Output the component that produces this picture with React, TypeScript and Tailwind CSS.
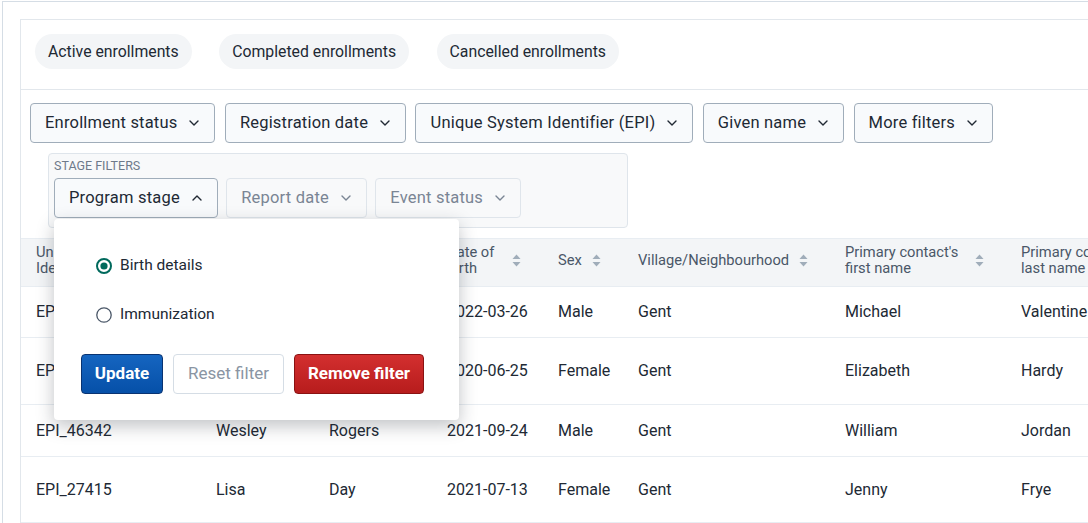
import React from 'react';

const font = { fontFamily: 'Roboto, "Liberation Sans", sans-serif' };

const Chevron = ({ up = false }: { up?: boolean }) => (
	<svg width="10" height="6" viewBox="0 0 10 6" className="shrink-0">
		<path
			d={up ? 'M1 5 L5 1 L9 5' : 'M1 1 L5 5 L9 1'}
			fill="none"
			stroke="currentColor"
			strokeWidth="1.4"
			strokeLinecap="round"
			strokeLinejoin="round"
		/>
	</svg>
);

const SortIcon = () => (
	<svg width="9" height="13" viewBox="0 0 9 13" className="shrink-0 text-[#a0adba]">
		<path d="M4.5 0.5 L8.5 5 L0.5 5 Z" fill="currentColor" />
		<path d="M4.5 12.5 L8.5 8 L0.5 8 Z" fill="currentColor" />
	</svg>
);

const FilterButton = ({ label, disabled = false, open = false }: { label: string; disabled?: boolean; open?: boolean }) => (
	<div
		className={
			'flex h-[40px] items-center gap-[12px] rounded-[4px] border pl-[14px] pr-[15px] text-[16.5px] tracking-[0.2px] ' +
			(disabled
				? 'border-[#dfe5eb] bg-[#f8f9fa] text-[#7a8594]'
				: 'border-[#a0adba] bg-[#f8fafc] text-[#212934]')
		}
	>
		<span>{label}</span>
		<Chevron up={open} />
	</div>
);

const Radio = ({ label, checked = false }: { label: string; checked?: boolean }) => (
	<label className="flex h-[23px] items-center gap-[7px] text-[15.5px] text-[#212934]">
		<svg width="18" height="18" viewBox="0 0 18 18">
			{checked ? (
				<>
					<circle cx="9" cy="9" r="7" fill="none" stroke="#00695c" strokeWidth="2" />
					<circle cx="9" cy="9" r="3.6" fill="#00695c" />
				</>
			) : (
				<circle cx="9" cy="9" r="7.2" fill="white" stroke="#4a5768" strokeWidth="1.3" />
			)}
		</svg>
		<span>{label}</span>
	</label>
);

const columns = [
	{ title: ['Unique System', 'Identifier (EPI)'], w: 'w-[180px]' },
	{ title: ['First name'], w: 'w-[113px]' },
	{ title: ['Last name'], w: 'w-[118px]' },
	{ title: ['Date of', 'birth'], w: 'w-[111px]' },
	{ title: ['Sex'], w: 'w-[80px]' },
	{ title: ['Village/Neighbourhood'], w: 'w-[207px]' },
	{ title: ["Primary contact's", 'first name'], w: 'w-[176px]' },
	{ title: ["Primary contact's", 'last name'], w: 'w-[200px]' },
];

const rows = [
	{ h: 'h-[51px]', cells: ['EPI_55123', 'Emma', 'Valentine', '2022-03-26', 'Male', 'Gent', 'Michael', 'Valentine'] },
	{ h: 'h-[67px]', cells: ['EPI_31094', 'Sophie', 'Hardy', '2020-06-25', 'Female', 'Gent', 'Elizabeth', 'Hardy'] },
	{ h: 'h-[52px]', cells: ['EPI_46342', 'Wesley', 'Rogers', '2021-09-24', 'Male', 'Gent', 'William', 'Jordan'] },
	{ h: 'h-[66px]', cells: ['EPI_27415', 'Lisa', 'Day', '2021-07-13', 'Female', 'Gent', 'Jenny', 'Frye'] },
];

const App = () => {
	return (
		<div className="h-[523px] w-[1088px] overflow-hidden bg-white" style={font}>
			<div className="ml-[2px] mt-[1px] h-full border-l border-t border-[#d5dde5] pl-[17px] pt-[17px]">
				<div className="h-full w-[1200px] border-l border-t border-[#e2e7ec]">
					{/* tabs */}
					<div className="flex gap-[27.5px] border-b border-[#e2e7ec] pb-[20px] pl-[14px] pt-[14px]">
						{['Active enrollments', 'Completed enrollments', 'Cancelled enrollments'].map((t) => (
							<div
								key={t}
								className="flex h-[35px] items-center rounded-full bg-[#f3f5f7] px-[13px] text-[15.8px] text-[#212934]"
							>
								{t}
							</div>
						))}
					</div>

					{/* filters */}
					<div className="relative pl-[9px] pt-[13px]">
						<div className="flex gap-[9.4px]">
							<FilterButton label="Enrollment status" />
							<FilterButton label="Registration date" />
							<FilterButton label="Unique System Identifier (EPI)" />
							<FilterButton label="Given name" />
							<FilterButton label="More filters" />
						</div>
						<div className="ml-[18px] mt-[10px] w-[580px] rounded-[4px] border border-[#dfe5eb] bg-[#f8f9fa] px-[5px] pb-[9px] pt-[4px]">
							<div className="text-[12.5px] uppercase leading-[15px] text-[#6e7a8a]">Stage filters</div>
							<div className="relative mt-[5px] flex gap-[8.4px]">
								<FilterButton label="Program stage" open />
								<FilterButton label="Report date" disabled />
								<FilterButton label="Event status" disabled />

								{/* popover */}
								<div className="absolute left-0 top-[41px] z-10 flex h-[201px] w-[405px] flex-col rounded-[4px] bg-white px-[27px] pt-[35.5px] shadow-[0_6px_18px_rgba(33,41,52,0.28)]">
									<div className="flex flex-col gap-[26px] pl-[14px]">
										<Radio label="Birth details" checked />
										<Radio label="Immunization" />
									</div>
									<div className="mt-[27.5px] flex gap-[10px]">
										<div className="flex h-[40px] w-[82px] items-center justify-center rounded-[4px] border border-[#093371] bg-gradient-to-b from-[#1565c0] to-[#0650a8] text-[17px] font-bold text-white">
											Update
										</div>
										<div className="flex h-[40px] w-[111px] items-center justify-center rounded-[4px] border border-[#d5dde5] bg-white text-[17px] text-[#8a95a3]">
											Reset filter
										</div>
										<div className="flex h-[40px] w-[130px] items-center justify-center rounded-[4px] border border-[#8a1212] bg-gradient-to-b from-[#d32f2f] to-[#b71c1c] text-[17px] font-bold text-white">
											Remove filter
										</div>
									</div>
								</div>
							</div>
						</div>
					</div>

					{/* table */}
					<div className="mt-[10px]">
						<div className="flex h-[49px] border-b border-t border-[#e8edf2] bg-[#f3f5f7]">
							{columns.map((c, i) => (
								<div
									key={i}
									className={c.w + ' flex shrink-0 items-center justify-between pb-[5px] pl-[15px] pr-[22px] text-[14.7px] leading-[16px] text-[#4a5768]'}
								>
									<div>
										{c.title.map((l) => (
											<div key={l} className="whitespace-nowrap">
												{l}
											</div>
										))}
									</div>
									<SortIcon />
								</div>
							))}
						</div>
						{rows.map((r, ri) => (
							<div key={ri} className={r.h + ' flex border-b border-[#e8edf2]'}>
								{r.cells.map((cell, ci) => (
									<div
										key={ci}
										className={columns[ci].w + ' flex shrink-0 items-center pl-[15px] text-[16px] text-[#212934]'}
									>
										{cell}
									</div>
								))}
							</div>
						))}
					</div>
				</div>
			</div>
		</div>
	);
};

export default App;
